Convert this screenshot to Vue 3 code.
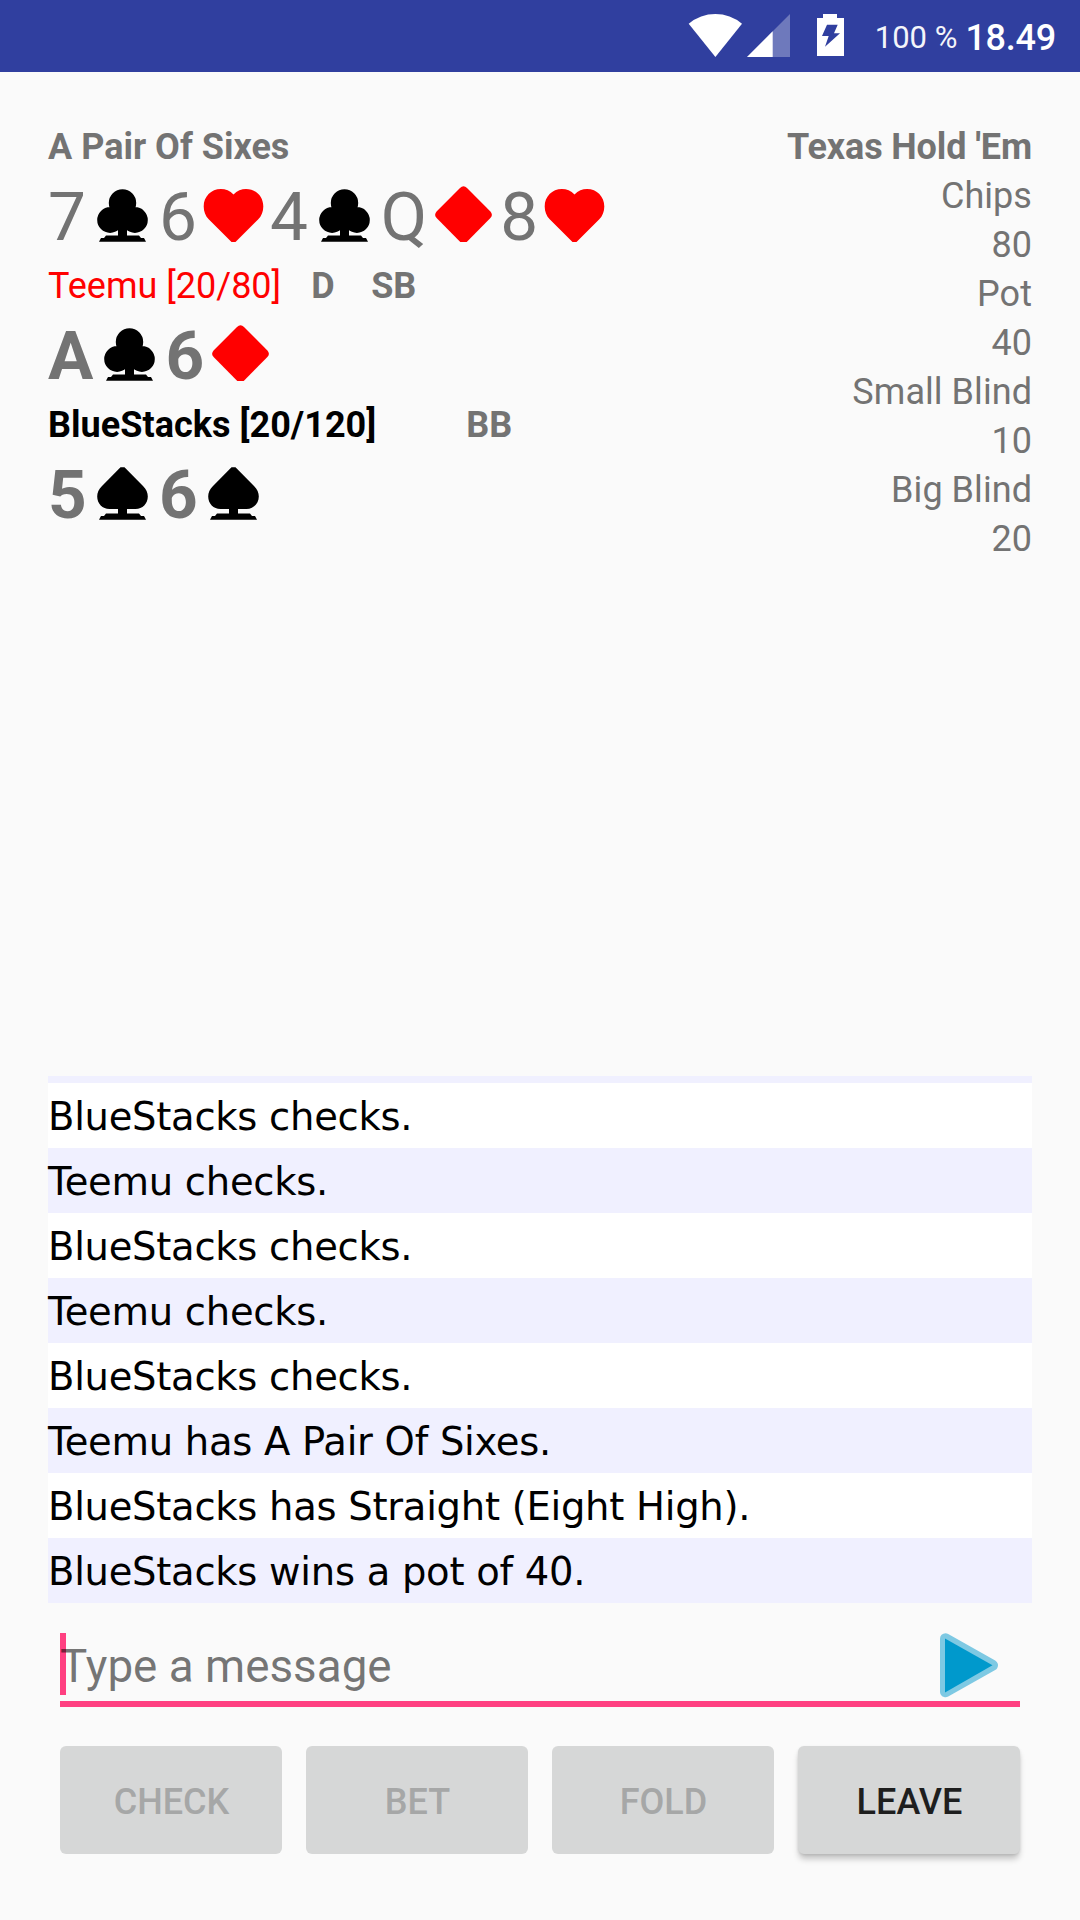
<script setup>
const board = [
  { rank: '7', suit: 'club' },
  { rank: '6', suit: 'heart' },
  { rank: '4', suit: 'club' },
  { rank: 'Q', suit: 'diamond' },
  { rank: '8', suit: 'heart' },
]
const hands = [
  { rank: 'A', suit: 'club' },
  { rank: '6', suit: 'diamond' },
]
const ownHand = [
  { rank: '5', suit: 'spade' },
  { rank: '6', suit: 'spade' },
]
const rows = [
  { cards: board, bold: false },
  { cards: hands, bold: true, name: 'Teemu [20/80]', folded: true, tags: ['D', 'SB', ''] },
  { cards: ownHand, bold: true, name: 'BlueStacks [20/120]', folded: false, tags: ['', '', 'BB'] },
]
const suits = {
  club: 'M22.8 32a13.700 13.700 0 1 0 27.400 0a13.700 13.700 0 1 0 -27.400 0ZM11.200 49a12.900 12.900 0 1 0 25.800 0a12.900 12.900 0 1 0 -25.800 0ZM36 49a12.900 12.900 0 1 0 25.800 0a12.900 12.900 0 1 0 -25.800 0ZM26 36V58H32V64.500H20L18 67H15L13 70.700H60L58 67H55L53 64.500H41V58H47V36Z',
  spade: 'M34.500 18.300H38.500L57 37C60.300 40.500 61.800 43.500 61.800 47.500C61.800 54.500 56.500 60 49.500 60H41V64.500H53L55 67H58L60 70.700H13L15 67H18L20 64.500H32V60H23.500C16.500 60 11.200 54.500 11.200 47.500C11.200 43.500 12.700 40.500 16 37Z',
  heart: 'M36.500 23.400C33 19.600 28.500 18 24 18C14 18 6.700 25.700 6.700 35.400C6.700 40.500 8.500 45 11.700 48.200L34.500 71H38.500L61.300 48.200C64.500 45 66.300 40.500 66.300 35.400C66.300 25.700 59 18 49 18C44.500 18 40 19.600 36.500 23.400Z',
  diamond: 'M33 17Q36.500 13.500 40 17L63.400 40.400Q66.400 43.700 63.400 47L39.700 71H33.300L9.600 47Q6.600 43.700 9.600 40.400Z',
}
const stats = ['Chips', '80', 'Pot', '40', 'Small Blind', '10', 'Big Blind', '20']
const log = [
  'BlueStacks checks.',
  'Teemu checks.',
  'BlueStacks checks.',
  'Teemu checks.',
  'BlueStacks checks.',
  'Teemu has A Pair Of Sixes.',
  'BlueStacks has Straight (Eight High).',
  'BlueStacks wins a pot of 40.',
]
const actions = [
  { label: 'CHECK', enabled: false },
  { label: 'BET', enabled: false },
  { label: 'FOLD', enabled: false },
  { label: 'LEAVE', enabled: true },
]
</script>

<template>
  <div class="screen">
    <header class="status">
      <svg class="radio" width="104" height="72" viewBox="0 0 104 72">
        <path d="M.7 23.700A41.500 41.500 0 0 1 54 23.700L27.400 57Z" fill="#fff" />
        <path d="M59 57L102 14V57Z" fill="#fff" fill-opacity=".3" />
        <path d="M59 57L84.700 31.300V57Z" fill="#fff" />
      </svg>
      <svg class="battery" width="27" height="72" viewBox="0 0 27 72">
        <path fill="#fff" fill-rule="evenodd" d="M6 14H20V18H27V56H0V18H6ZM10 24.700L5 36H11.700L8 46.700L23 33.300H17L20.700 24.700Z" />
      </svg>
      <span class="percent">100 %</span>
      <span class="clock">18.49</span>
    </header>

    <main class="table">
      <section class="players">
        <div class="heading">A Pair Of Sixes</div>
        <template v-for="(row, i) in rows" :key="i">
          <div v-if="row.name" class="player">
            <span class="name" :class="row.folded ? 'out' : 'winner'">{{ row.name }}</span>
            <span class="tag dealer">{{ row.tags[0] }}</span>
            <span class="tag small">{{ row.tags[1] }}</span>
            <span class="tag big">{{ row.tags[2] }}</span>
          </div>
          <div class="cards" :class="{ bold: row.bold }">
            <template v-for="(card, j) in row.cards" :key="j">
              <span class="rank">{{ card.rank }}</span>
              <svg class="suit" :class="card.suit" width="73" height="90" viewBox="0 0 73 90">
                <path :d="suits[card.suit]" />
              </svg>
            </template>
          </div>
        </template>
      </section>
      <aside class="stats">
        <div class="heading game">Texas Hold 'Em</div>
        <div v-for="s in stats" :key="s" class="stat">{{ s }}</div>
      </aside>
    </main>

    <ul class="log">
      <li v-for="(line, i) in log" :key="i">{{ line }}</li>
    </ul>

    <div class="compose">
      <i class="caret"></i>
      <span class="hint">Type a message</span>
      <svg class="send" width="60" height="66" viewBox="0 0 60 66">
        <path d="M5.500 5.700L52.500 32.200L5.500 58.700Z" fill="#7ec9e3" stroke="#7ec9e3" stroke-width="11" stroke-linejoin="round" />
        <path d="M5 5.500L52.500 32.200L5 59.500Z" fill="#0099cc" />
      </svg>
    </div>

    <footer class="actions">
      <button v-for="a in actions" :key="a.label" :disabled="!a.enabled">{{ a.label }}</button>
    </footer>
  </div>
</template>

<style>
body {
  margin: 0;
  background: #fafafa;
}
</style>

<style scoped>
.screen {
  display: flex;
  flex-direction: column;
  width: 1080px;
  height: 1920px;
  overflow: hidden;
  background: #fafafa;
  color: #737373;
  font: 36px/51px Roboto, sans-serif;
}
.status {
  display: flex;
  justify-content: flex-end;
  height: 72px;
  padding-right: 24px;
  background: #303f9f;
  color: #fff;
}
.battery {
  margin: 0 31px 0 25px;
}
.percent {
  font-size: 31px;
  line-height: 75px;
  margin-right: 8px;
  opacity: .95;
}
.clock {
  font-weight: 500;
  line-height: 76px;
  letter-spacing: -.25px;
}
.table {
  display: flex;
  justify-content: space-between;
  height: 954px;
  padding: 50px 48px 0;
  box-sizing: border-box;
}
.heading {
  height: 49px;
  font-weight: 700;
}
.game {
  letter-spacing: -.13px;
}
.stat {
  height: 49px;
  letter-spacing: .05px;
}
.player {
  display: flex;
  height: 49px;
  white-space: pre;
}
.out {
  color: #f00;
}
.winner {
  color: #000;
  font-weight: 700;
  letter-spacing: .03px;
}
.tag {
  font-weight: 700;
}
.dealer {
  min-width: 30px;
  margin-left: 30px;
}
.small {
  min-width: 30px;
  margin-left: 30px;
}
.big {
  margin-left: -30px;
}
.cards {
  display: flex;
  height: 90px;
  font-size: 67.5px;
  line-height: 92px;
}
.bold {
  font-weight: 700;
}
.bold .rank {
  letter-spacing: -.8px;
}
.suit {
  fill: #000;
}
.heart,
.diamond {
  fill: #f00;
}
.stats {
  text-align: right;
}
.log {
  height: 527px;
  box-sizing: border-box;
  margin: 50px 48px 0;
  padding: 7px 0 0;
  list-style: none;
  background: #f0f0ff;
  color: #000;
  font: 38.5px/68px "DejaVu Sans", sans-serif;
  letter-spacing: -.27px;
}
.log li {
  height: 65px;
}
.log li:nth-child(odd) {
  background: #fff;
}
.compose {
  display: flex;
  align-items: flex-start;
  height: 104px;
  box-sizing: border-box;
  margin: 0 60px;
  padding-top: 30px;
  border-bottom: 6px solid #ff4081;
}
.caret {
  width: 6px;
  height: 62px;
  margin-right: -6px;
  background: #ff4081;
}
.hint {
  flex: 1;
  font-size: 45.8px;
  line-height: 68px;
  color: rgba(0, 0, 0, .54);
}
.send {
  margin-right: 20px;
}
.actions {
  display: flex;
  gap: 24px;
  margin: 39px 60px 0;
}
button {
  flex: 1;
  height: 108px;
  padding: 4px 0 0 1px;
  border: 0;
  border-radius: 6px;
  background: #d6d7d7;
  color: #1e1e1e;
  font: 500 36px/42px Roboto, sans-serif;
  box-shadow: 0 6px 6px -1px rgba(0, 0, 0, .22), 0 1px 3px rgba(0, 0, 0, .1);
}
button:disabled {
  color: #a6a7a7;
  box-shadow: none;
}
</style>
